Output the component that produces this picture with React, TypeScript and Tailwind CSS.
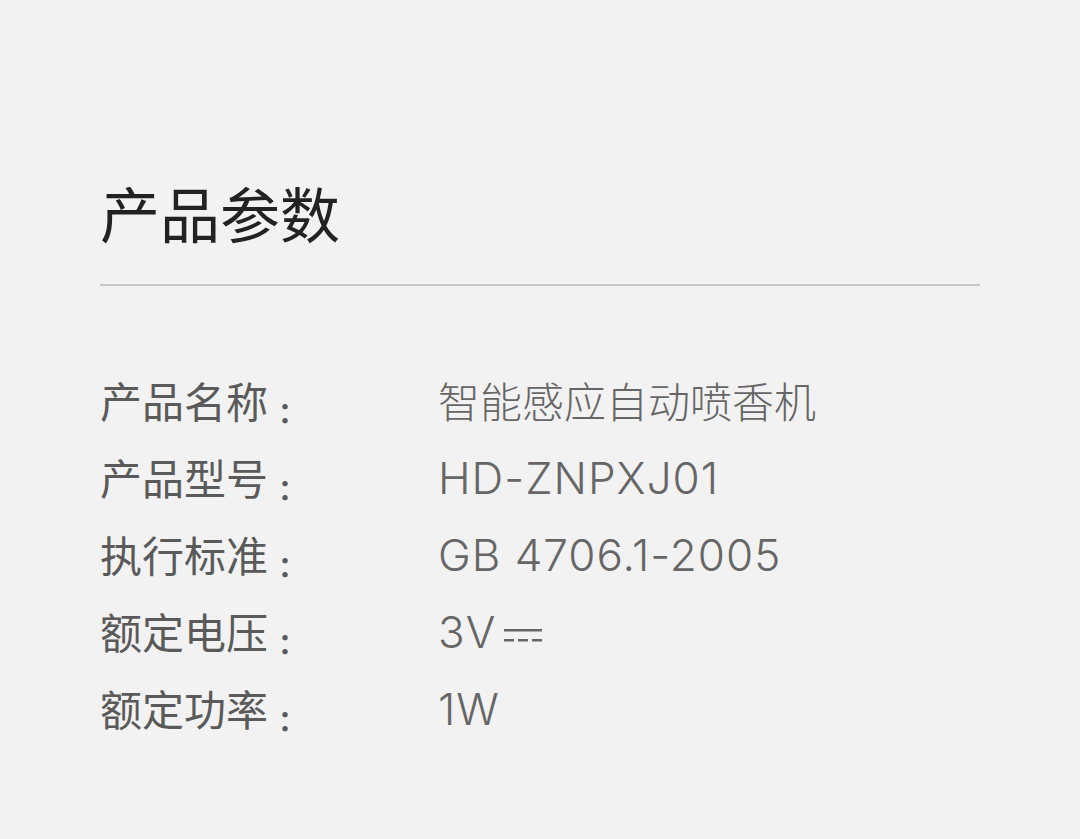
import React from "react";

const font = { fontFamily: '"Noto Sans CJK SC", "Noto Sans", sans-serif' };
const latin = { fontFamily: 'Inter, "Noto Sans CJK SC", sans-serif' };

function DC() {
  return (
    <svg width="38" height="14" viewBox="0 0 38 14" className="inline-block ml-[8px]" style={{ verticalAlign: "6px" }}>
      <rect x="0" y="1" width="38" height="2.5" fill="#666" />
      <rect x="0" y="11" width="10" height="2.5" fill="#666" />
      <rect x="14" y="11" width="10" height="2.5" fill="#666" />
      <rect x="28" y="11" width="10" height="2.5" fill="#666" />
    </svg>
  );
}

const rows: [string, React.ReactNode, boolean][] = [
  ["产品名称", "智能感应自动喷香机", false],
  ["产品型号", "HD-ZNPXJ01", true],
  ["执行标准", "GB 4706.1-2005", true],
  ["额定电压", <span>3V<DC /></span>, true],
  ["额定功率", "1W", true],
];

export default function App() {
  return (
    <div className="w-[1080px] h-[839px] bg-[#f2f2f2] px-[100px] pt-[177px]" style={font}>
      <h1 className="text-[60px] leading-[70px] text-[#222] font-normal">产品参数</h1>
      <div className="mt-[37px] h-[2px] bg-[#c8c8c8]" />
      <div className="mt-[75px] flex flex-col">
        {rows.map(([k, v, isLatin], i) => (
          <div key={i} className="flex h-[77px] items-center leading-[77px]">
            <div className="w-[338px] flex items-center text-[42px] text-[#5a5a5a]">
              <span>{k}</span>
              <span className="relative top-[11px] ml-[10px] text-[28px] leading-none font-bold">：</span>
            </div>
            {isLatin ? (
              <div className="text-[44px] text-[#666] font-light tracking-[1px] pt-[4px]" style={latin}>{v}</div>
            ) : (
              <div className="text-[42px] text-[#666] font-light">{v}</div>
            )}
          </div>
        ))}
      </div>
    </div>
  );
}
